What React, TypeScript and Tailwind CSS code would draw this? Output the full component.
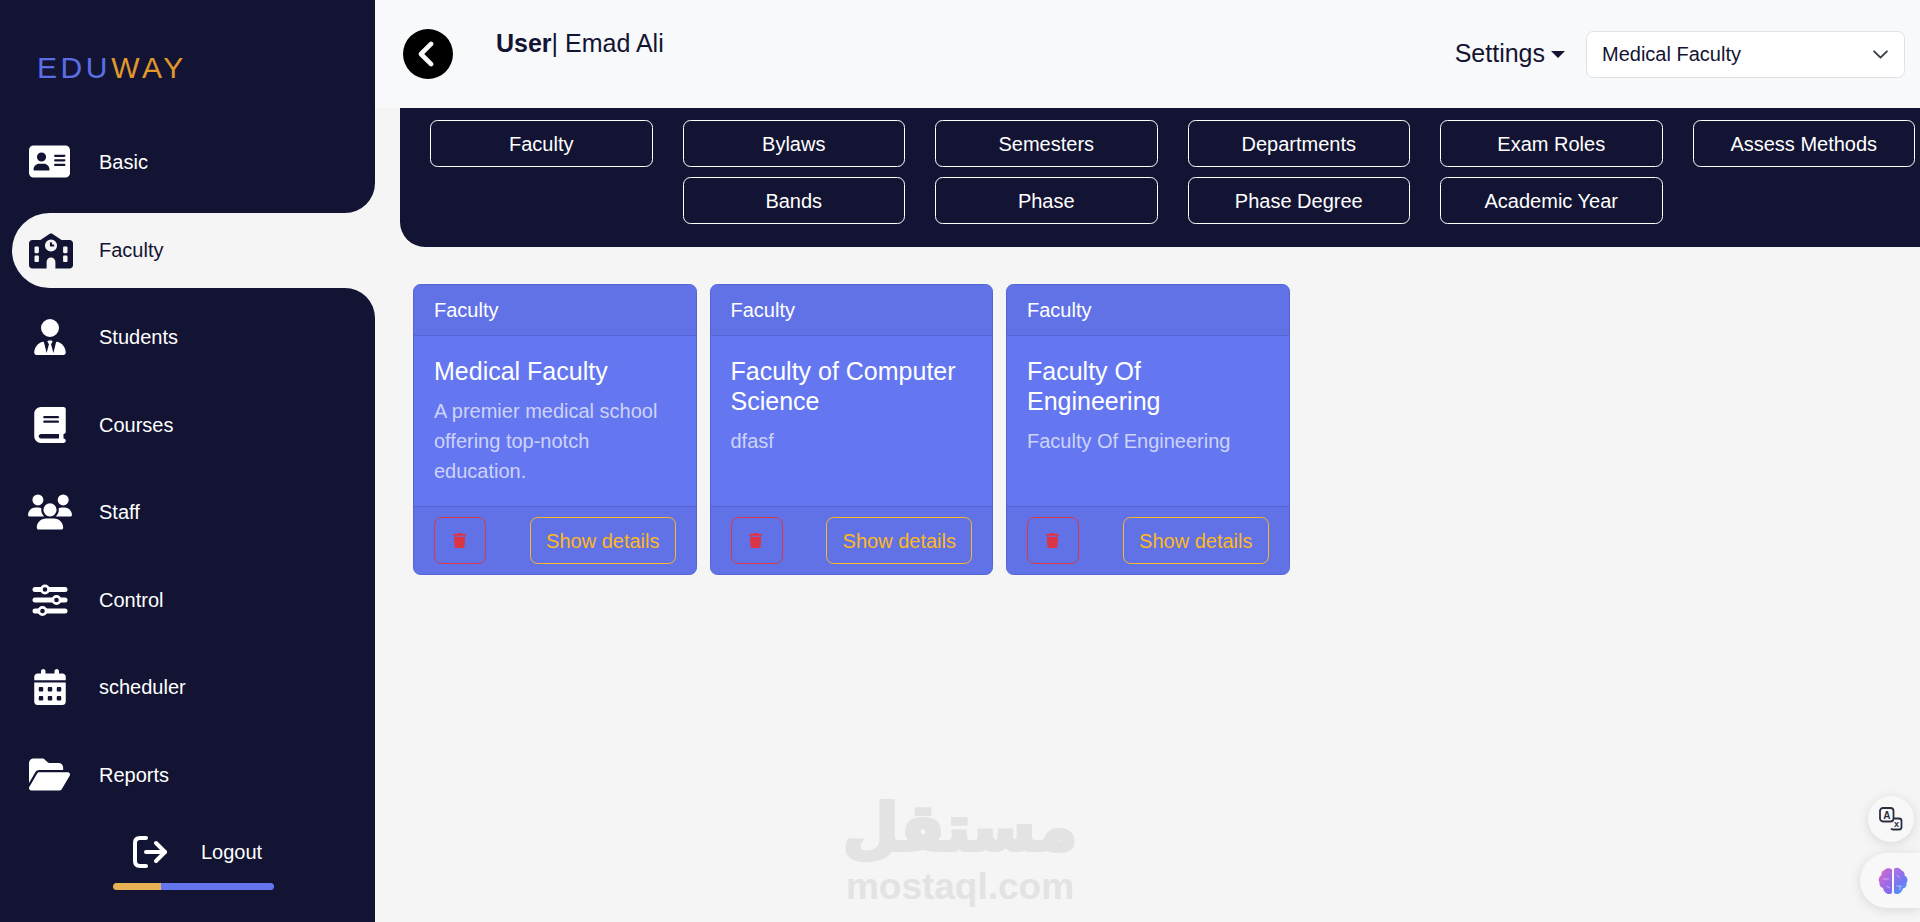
import {
  FaAddressCard,
  FaSchool,
  FaUserTie,
  FaBook,
  FaUsers,
  FaCalendarDays,
  FaFolderOpen,
  FaTrash,
  FaCircleChevronLeft,
} from "react-icons/fa6";
import type { ReactNode } from "react";

function SlidersIcon() {
  return (
    <svg width="36" height="36" viewBox="0 0 36 36">
      <g stroke="currentColor" strokeWidth="5" strokeLinecap="round">
        <path d="M3 7.5H33" />
        <path d="M3 18H33" />
        <path d="M3 29H33" />
      </g>
      <g fill="#131433" stroke="currentColor" strokeWidth="2.6">
        <circle cx="13" cy="7.5" r="3.6" />
        <circle cx="24.5" cy="18" r="3.6" />
        <circle cx="10.5" cy="29" r="3.6" />
      </g>
    </svg>
  );
}

function LogoutIcon() {
  return (
    <svg width="36" height="32" viewBox="0 0 36 32" fill="none" stroke="white" strokeWidth="4" strokeLinecap="round" strokeLinejoin="round">
      <path d="M13 2H7Q2 2 2 7V25Q2 30 7 30H13" />
      <path d="M13 16H32" />
      <path d="M23 7L32 16L23 25" />
    </svg>
  );
}

function TranslateIcon() {
  return (
    <svg width="24" height="24" viewBox="0 0 24 24" fill="none" stroke="#2b2d42" strokeWidth="1.8" className="font-bold">
      <path d="M14.5 11.5H20a2.5 2.5 0 0 1 2.5 2.5v6a2.5 2.5 0 0 1-2.5 2.5h-6a2.5 2.5 0 0 1-2-1" />
      <rect x="1" y="1" width="13.5" height="13.5" rx="3" fill="#f8f8f8" />
      <text x="7.75" y="11.5" textAnchor="middle" fontSize="10" fill="#2b2d42" stroke="none">A</text>
      <text x="17.5" y="20" textAnchor="middle" fontSize="9" fill="#2b2d42" stroke="none">x</text>
    </svg>
  );
}

function BrainIcon() {
  return (
    <svg width="30" height="28" viewBox="0 0 30 28">
      <defs>
        <linearGradient id="brainLeft" x1="0" y1="0" x2="0.8" y2="1">
          <stop offset="0" stopColor="#f0a02c" />
          <stop offset="0.3" stopColor="#c168d8" />
          <stop offset="1" stopColor="#7c6cf0" />
        </linearGradient>
        <linearGradient id="brainRight" x1="0.2" y1="0" x2="0.6" y2="1">
          <stop offset="0" stopColor="#b46fe4" />
          <stop offset="0.6" stopColor="#6f78f2" />
          <stop offset="1" stopColor="#4f9cf5" />
        </linearGradient>
      </defs>
      <path d="M14 3C13 0.5 8 0.5 6.5 3C4 3.5 3 6 3.5 8C1 9.5 0 13 1.5 15.5C1 18 2.5 20.5 5 21C5.5 25 9 27.5 12 27C13.5 27 14 26 14 24.5Z" fill="url(#brainLeft)" />
      <path d="M16 2C17.5 0 22 0.5 23.5 3.5C26 4 27 6.5 26.5 8.5C29.5 10 30.5 13.5 28.5 16C29 18.5 27.5 21 25 21.5C24 25.5 20.5 27.5 18 27C16.5 27 16 26 16 24.5Z" fill="url(#brainRight)" />
      <g stroke="#ffffff" strokeOpacity="0.45" strokeWidth="1" fill="none">
        <path d="M5 12H11M8 19L12 21" />
        <path d="M19 8L22 11M18 19H24M22 19V23" />
      </g>
    </svg>
  );
}

function NavItem({ icon, label, active }: { icon: ReactNode; label: string; active?: boolean }) {
  return (
    <div className={active ? "flex h-full items-center text-[#131433]" : "flex h-[87.5px] items-center text-white"}>
      <div className={active ? "flex w-[45px] justify-center ml-[16px]" : "flex w-[45px] justify-center ml-[27px]"}>{icon}</div>
      <span className={active ? "ml-[26px] mb-[2px] text-[20px]" : "ml-[27px] text-[20px]"}>{label}</span>
    </div>
  );
}

function Card({ title, text }: { title: string; text: string }) {
  return (
    <div className="flex w-[283.75px] flex-col rounded-[7.5px] border border-[#5465d3] bg-[#6477f0]">
      <div className="rounded-t-[7px] border-b border-[#5465d3] bg-[#6072e6] px-5 py-[10px] text-[20px] leading-[30px] text-white">Faculty</div>
      <div className="flex-1 p-5">
        <h5 className="mb-[10px] text-[25px] leading-[30px] text-white">{title}</h5>
        <p className="text-[20px] leading-[30px] text-[#cdd3fa]">{text}</p>
      </div>
      <div className="flex items-center justify-between rounded-b-[7px] border-t border-[#5465d3] bg-[#6072e6] px-5 py-[10px]">
        <button className="flex h-[47px] w-[52px] items-center justify-center rounded-[7.5px] border border-[#dc3545] pr-[2px] text-[#dc3545]">
          <FaTrash size={15} />
        </button>
        <button className="h-[47px] w-[146px] rounded-[7.5px] border border-[#ffb820] text-[20px] text-[#ffb820]">Show details</button>
      </div>
    </div>
  );
}

const tabClass = "flex h-[47px] items-center justify-center rounded-[7.5px] border border-white text-[20px] text-white";

export default function App() {
  return (
    <div className="relative flex h-[922px] w-[1920px] overflow-hidden bg-[#f5f5f5] font-['Liberation_Sans',Arial,sans-serif]">
      <aside className="flex w-[375px] flex-col">
        <div className="h-[213px] rounded-br-[30px] bg-[#131433]">
          <div className="flex h-[118px] items-start pl-[37px] pt-[49px] text-[30px] leading-[37px] tracking-[3.6px]">
            <span className="text-[#5a6ee6]">EDU</span>
            <span className="text-[#e0982a]">WAY</span>
          </div>
          <NavItem icon={<FaAddressCard size={41} />} label="Basic" />
        </div>
        <div className="h-[75px] bg-[#131433]">
          <div className="ml-3 h-full rounded-l-[37.5px] bg-[#f5f5f5]">
            <NavItem active icon={<FaSchool size={44} />} label="Faculty" />
          </div>
        </div>
        <div className="flex-1 rounded-tr-[30px] bg-[#131433] pt-[5.5px]">
          <NavItem icon={<FaUserTie size={36} />} label="Students" />
          <NavItem icon={<FaBook size={36} />} label="Courses" />
          <NavItem icon={<FaUsers size={44} />} label="Staff" />
          <NavItem icon={<SlidersIcon />} label="Control" />
          <NavItem icon={<FaCalendarDays size={36} />} label="scheduler" />
          <NavItem icon={<FaFolderOpen size={41} />} label="Reports" />
          <div className="mt-[17.5px] flex h-[32px] items-center pl-[133px] text-white">
            <LogoutIcon />
            <span className="ml-[32px] text-[20px]">Logout</span>
          </div>
          <div className="ml-[113px] mt-[15px] flex h-[7px] w-[161px] overflow-hidden rounded-full">
            <div className="w-[30%] bg-[#e9b155]" />
            <div className="flex-1 bg-[#6376ef]" />
          </div>
        </div>
      </aside>

      <main className="flex-1">
        <header className="flex h-[108px] bg-[#f8f9fa] pl-[28px] pr-[15px]">
          <FaCircleChevronLeft size={50} className="mt-[29px] text-black" />
          <div className="ml-[43px] pt-[24px] text-[25px] leading-[38px] text-[#131433]">
            <b>User</b>| Emad Ali
          </div>
          <div className="ml-auto flex h-[47px] items-center self-center text-[#131433]">
            <span className="text-[25px]">Settings</span>
            <span className="ml-[6px] h-0 w-0 border-x-[7px] border-t-[7.5px] border-x-transparent border-t-[#131433]" />
            <div className="ml-[21px] flex h-[47px] w-[319px] items-center justify-between rounded-[7.5px] border border-[#dee2e6] bg-white pl-[15px] pr-[15px] text-[20px]">
              Medical Faculty
              <svg width="17" height="17" viewBox="0 0 16 16" fill="none" stroke="#343a40" strokeWidth="1.7" strokeLinecap="round" strokeLinejoin="round">
                <path d="m2 5 6 6 6-6" />
              </svg>
            </div>
          </div>
        </header>

        <section className="ml-[25px] h-[139px] rounded-bl-[25px] bg-[#131433] pl-[30px] pt-3">
          <div className="grid w-[1485px] grid-cols-6 gap-x-[30px] gap-y-[10px]">
            <div className={tabClass}>Faculty</div>
            <div className={tabClass}>Bylaws</div>
            <div className={tabClass}>Semesters</div>
            <div className={tabClass}>Departments</div>
            <div className={tabClass}>Exam Roles</div>
            <div className={tabClass}>Assess Methods</div>
            <div className={`col-start-2 ${tabClass}`}>Bands</div>
            <div className={tabClass}>Phase</div>
            <div className={tabClass}>Phase Degree</div>
            <div className={tabClass}>Academic Year</div>
          </div>
        </section>

        <div className="ml-[38px] mt-[37px] flex gap-[12.75px]">
          <Card title="Medical Faculty" text="A premier medical school offering top-notch education." />
          <Card title="Faculty of Computer Science" text="dfasf" />
          <Card title="Faculty Of Engineering" text="Faculty Of Engineering" />
        </div>
      </main>

      {/* watermark */}
      <div className="pointer-events-none absolute left-[845px] top-[790px] flex w-[230px] flex-col items-center text-[#e3e3e3]">
        <span dir="rtl" className="font-['DejaVu_Sans',sans-serif] text-[64px] font-bold leading-[76px] [-webkit-text-stroke:4px_#e3e3e3]">مستقل</span>
        <span className="text-[37px] font-bold leading-[42px]">mostaql.com</span>
      </div>

      {/* floating widgets */}
      <div className="absolute left-[1868px] top-[796px] flex h-[46px] w-[46px] items-center justify-center rounded-full bg-[#f8f8f8] shadow-[0_2px_12px_rgba(0,0,0,0.12)]">
        <TranslateIcon />
      </div>
      <div className="absolute left-[1860px] top-[853px] flex h-[55px] w-[60px] items-center rounded-l-full bg-[#f8f8f8] pl-[18px] shadow-[0_2px_12px_rgba(0,0,0,0.12)]">
        <BrainIcon />
      </div>
    </div>
  );
}
